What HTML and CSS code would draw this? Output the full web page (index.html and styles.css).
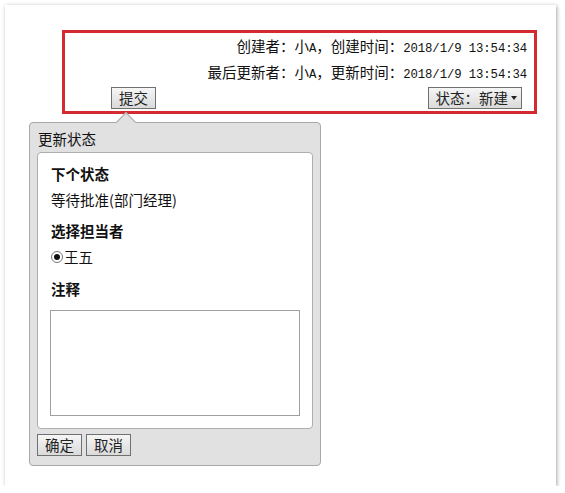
FILE: index.html
```html
<!DOCTYPE html>
<html lang="zh-CN">
<head>
  <meta charset="UTF-8">
  <meta name="viewport" content="width=device-width, initial-scale=1.0">
  <title>更新状态</title>
  <link rel="stylesheet" href="styles.css">
</head>
<body>
  <div class="sheet">
    <div class="record-info">
        <div class="info-line">创建者：小<span class="mono">A</span>，创建时间：<span class="mono">2018/1/9 13:54:34</span></div>
        <div class="info-line">最后更新者：小<span class="mono">A</span>，更新时间：<span class="mono">2018/1/9 13:54:34</span></div>
        <div class="info-actions">
            <button class="btn">提交</button>
            <button class="btn btn-status">状态：新建<span class="caret"></span></button>
        </div>
    </div>

    <!-- 更新状态弹出框 -->
    <div class="popover">
        <span class="popover-arrow"></span>
        <div class="popover-title">更新状态</div>
        <div class="popover-body">
            <div class="field-label">下个状态</div>
            <div class="field-value">等待批准(部门经理)</div>
            <div class="field-label">选择担当者</div>
            <div class="field-value"><span class="radio checked"></span>王五</div>
            <div class="field-label label-note">注释</div>
            <textarea class="note-input"></textarea>
        </div>
        <div class="popover-actions">
            <button class="btn">确定</button>
            <button class="btn">取消</button>
        </div>
    </div>
  </div>
</body>
</html>
```

FILE: styles.css
```css
body {
    margin: 0;
    font-family: "Noto Sans CJK SC", sans-serif;
    font-size: 14.5px;
    color: #111;
    background-color: #fff;
}
.sheet {
    position: relative;
    margin: 5px 9px 0 5px;
    height: 481px;
    padding: 25px 19px 0 57px;
    box-sizing: border-box;
    background-color: #fff;
    box-shadow: 1px 1px 4px rgba(0, 0, 0, 0.35);
}
.record-info {
    border: 3px solid #d42a31;
    padding: 0 7px 2px 7px;
    text-align: right;
}
.info-line {
    height: 26px;
    line-height: 26px;
}
.mono {
    font-family: "Liberation Mono", monospace;
    font-size: 12.3px;
    line-height: 10px;
    letter-spacing: -0.1px;
}
.info-actions {
    display: flex;
    justify-content: space-between;
    align-items: center;
    margin-top: 2px;
    padding: 0 5px 0 39px;
}
.btn {
    height: 22px;
    padding: 0 7px;
    border: 1px solid #707070;
    border-radius: 0;
    background: linear-gradient(#f6f6f6, #dadada);
    font-family: "Noto Sans CJK SC", sans-serif;
    font-size: 14.5px;
    line-height: 20px;
    color: #222;
    cursor: pointer;
}
.btn-status {
    display: flex;
    align-items: center;
    padding: 0 4px 0 7px;
}
.caret {
    display: inline-block;
    margin-left: 3px;
    border-left: 3.5px solid transparent;
    border-right: 3.5px solid transparent;
    border-top: 4px solid #222;
}
.popover {
    position: absolute;
    left: 24px;
    top: 117px;
    width: 292px;
    box-sizing: border-box;
    background-color: #e1e1e1;
    border: 1px solid #a8a8a8;
    border-radius: 4px;
    padding: 0 7px 9px 7px;
}
.popover-arrow {
    position: absolute;
    left: 89px;
    top: -8px;
    width: 14px;
    height: 14px;
    background-color: #e1e1e1;
    border-top: 1px solid #a8a8a8;
    border-left: 1px solid #a8a8a8;
    box-sizing: border-box;
    transform: rotate(45deg);
}
.popover-title {
    position: relative;
    padding: 5px 1px 0;
    line-height: 21px;
    margin-bottom: 1px;
}
.popover-body {
    margin-top: 3px;
    background-color: #fff;
    border: 1px solid #aeaeae;
    border-radius: 4px;
    padding: 10px 12px 12px 13px;
}
.field-label {
    font-weight: bold;
    line-height: 21px;
    margin-top: 10px;
}
.field-label:first-child {
    margin-top: 0;
}
.label-note {
    margin-top: 11px;
}
.field-value {
    display: flex;
    align-items: center;
    line-height: 21px;
    margin-top: 5px;
}
.radio {
    display: inline-block;
    width: 12px;
    height: 12px;
    box-sizing: border-box;
    border: 1px solid #777;
    border-radius: 50%;
    background-color: #fff;
    margin-right: 1px;
    position: relative;
}
.radio.checked::after {
    content: "";
    position: absolute;
    left: 2px;
    top: 2px;
    width: 6px;
    height: 6px;
    border-radius: 50%;
    background-color: #111;
}
.note-input {
    display: block;
    width: 250px;
    height: 106px;
    margin: 11px 0 0 -1px;
    box-sizing: border-box;
    border: 1px solid #a0a0a0;
    resize: none;
    font-family: inherit;
}
.popover-actions {
    display: flex;
    gap: 4px;
    margin-top: 5px;
}
```
